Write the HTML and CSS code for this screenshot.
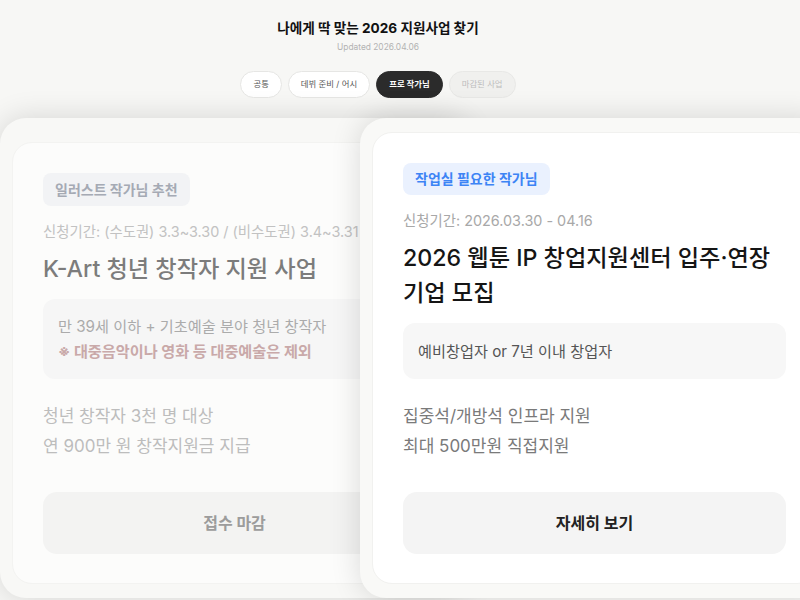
FILE: index.html
```html
<!DOCTYPE html>
<html lang="ko">
<head>
<meta charset="utf-8">
<title>지원사업 찾기</title>
<link rel="stylesheet" href="styles.css">
</head>
<body>
<header class="head">
  <h1 class="head-title">나에게 딱 맞는 2026 지원사업 찾기</h1>
  <p class="head-updated">Updated 2026.04.06</p>
  <nav class="chips">
    <span class="chip">공통</span>
    <span class="chip">데뷔 준비 / 어시</span>
    <span class="chip chip-active">프로 작가님</span>
    <span class="chip chip-closed">마감된 사업</span>
  </nav>
</header>
<main class="cards">
  <section class="frame frame-closed">
    <div class="card card-closed">
      <span class="tag tag-gray">일러스트 작가님 추천</span>
      <p class="date">신청기간: (수도권) 3.3~3.30 / (비수도권) 3.4~3.31</p>
      <h2 class="title">K-Art 청년 창작자 지원 사업</h2>
      <div class="box">만 39세 이하 + 기초예술 분야 청년 창작자<br><strong class="note">※ 대중음악이나 영화 등 대중예술은 제외</strong></div>
      <p class="desc">청년 창작자 3천 명 대상<br>연 900만 원 창작지원금 지급</p>
      <div class="btn">접수 마감</div>
    </div>
  </section>
  <section class="frame frame-front">
    <div class="card">
      <span class="tag tag-blue">작업실 필요한 작가님</span>
      <p class="date">신청기간: 2026.03.30 - 04.16</p>
      <h2 class="title">2026 웹툰 IP 창업지원센터 입주·연장 기업 모집</h2>
      <div class="box">예비창업자 or 7년 이내 창업자</div>
      <p class="desc">집중석/개방석 인프라 지원<br>최대 500만원 직접지원</p>
      <div class="btn">자세히 보기</div>
    </div>
  </section>
</main>
</body>
</html>
```
FILE: styles.css
```css
* { box-sizing: border-box; }
html, body {
  margin: 0;
  padding: 0;
}
body {
  width: 800px;
  height: 600px;
  overflow: hidden;
  background: #f7f7f5;
  font-family: "Inter", "Noto Sans CJK KR", "Noto Sans", sans-serif;
  color: #111;
  word-break: keep-all;
}
.head {
  width: 756px;
  text-align: center;
  padding-top: 18px;
}
.head-title {
  margin: 0;
  font-size: 13.6px;
  line-height: 20px;
  font-weight: 700;
  color: #111;
}
.head-updated {
  margin: 2px 0 0;
  font-size: 8.4px;
  line-height: 14px;
  color: #b3b3b3;
}
.chips {
  margin-top: 17px;
  display: flex;
  justify-content: center;
  gap: 6px;
}
.chip {
  height: 27px;
  line-height: 25px;
  padding: 0 12px;
  border: 1px solid #e6e6e4;
  border-radius: 999px;
  background: #fff;
  font-size: 8.4px;
  color: #555;
}
.chip-active {
  background: #2b2b2b;
  border-color: #2b2b2b;
  color: #fff;
  font-weight: 700;
}
.chip-closed {
  background: #f0f0ee;
  border-color: #e8e8e6;
  color: #bdbdbd;
}
.cards {
  display: flex;
  margin-top: 20px;
}
.frame {
  flex: 0 0 469px;
  padding: 14px 12px;
  background: #f9f9f7;
  border-radius: 26px;
  box-shadow: 0 0 30px rgba(0, 0, 0, 0.14);
  display: flex;
  flex-direction: column;
  justify-content: flex-end;
}
.frame-front {
  margin-left: -109px;
  z-index: 1;
}
.card {
  width: 445px;
  background: #fff;
  border: 1px solid #f1f1ef;
  border-radius: 20px;
  padding: 30px 30px 29px;
  display: flex;
  flex-direction: column;
}
.tag {
  align-self: flex-start;
  height: 32px;
  line-height: 32px;
  padding: 0 12px;
  border-radius: 8px;
  font-size: 14px;
  font-weight: 700;
}
.tag-blue {
  background: #eaf1fe;
  color: #3d84f5;
}
.tag-gray {
  background: #f2f3f5;
  color: #a5aab4;
  height: 33px;
  line-height: 33px;
}
.date {
  margin: 16px 0 0;
  font-size: 14.4px;
  line-height: 20px;
  color: #a8a8a8;
}
.title {
  margin: 10px 0 0;
  font-size: 23.2px;
  line-height: 35px;
  font-weight: 500;
  color: #151515;
}
.box {
  margin-top: 12px;
  padding: 15.5px 15px;
  background: #f7f7f7;
  border-radius: 12px;
  font-size: 15.2px;
  line-height: 25px;
  color: #555;
}
.desc {
  margin: 22px 0 0;
  font-size: 17px;
  line-height: 30px;
  color: #7a7a7a;
}
.btn {
  margin-top: 31px;
  height: 62px;
  line-height: 62px;
  border-radius: 14px;
  background: #f4f4f4;
  text-align: center;
  font-size: 16px;
  font-weight: 700;
  color: #222;
}
.frame-closed {
  background: #f8f8f6;
}
.card-closed {
  background: #fcfcfb;
  border-color: #f3f3f1;
}
.card-closed .date { color: #c2c2c2; }
.card-closed .title { color: #7c7c7c; }
.card-closed .box {
  background: #f6f6f6;
  color: #ababab;
  padding: 15px;
}
.card-closed .note {
  color: #c9a9a9;
  font-weight: 700;
}
.card-closed .desc { color: #bdbdbd; }
.card-closed .btn {
  background: #f3f3f2;
  color: #9c9c9c;
}
```
